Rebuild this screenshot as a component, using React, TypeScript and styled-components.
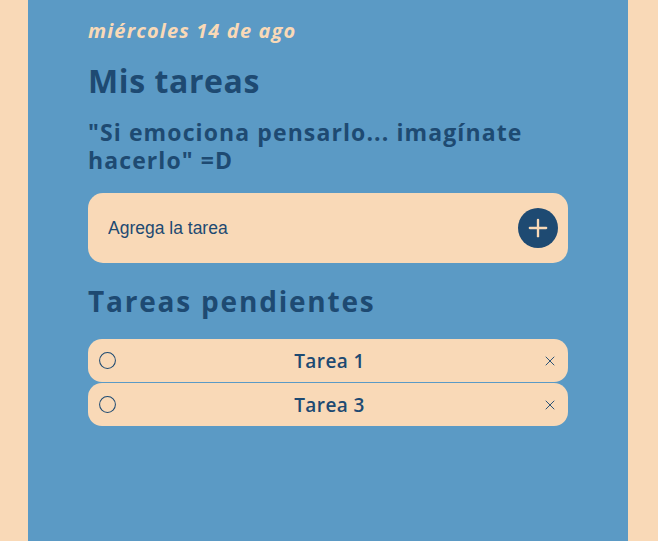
import React from 'react';
import styled, { createGlobalStyle } from 'styled-components';
import { Plus, Circle, X } from 'lucide-react';

const GlobalStyle = createGlobalStyle`
  html, body {
    margin: 0;
    padding: 0;
    background: #f9d9b7;
  }
  body {
    font-family: 'Open Sans', 'Liberation Sans', sans-serif;
  }
`;

const Page = styled.main`
  width: 600px;
  min-height: 541px;
  margin: 0 0 0 28px;
  background: #5b9ac5;
  padding: 18px 60px 0;
  box-sizing: border-box;
  display: flex;
  flex-direction: column;
`;

const DateLine = styled.p`
  margin: 0;
  font-size: 20px;
  font-weight: 700;
  font-style: italic;
  letter-spacing: 1.15px;
  color: #f9d9b7;
  line-height: 26px;
`;

const Title = styled.h1`
  margin: 17px 0 0;
  font-size: 32px;
  font-weight: 700;
  letter-spacing: 0.6px;
  color: #1e4a72;
  line-height: 40px;
`;

const Quote = styled.h2`
  margin: 17px 0 0;
  font-size: 23px;
  font-weight: 700;
  letter-spacing: 1.1px;
  color: #1e4a72;
  line-height: 28px;
`;

const InputBox = styled.form`
  margin-top: 19px;
  height: 70px;
  background: #f9d9b7;
  border-radius: 15px;
  display: flex;
  align-items: center;
  justify-content: space-between;
  padding: 0 10px 0 20px;
`;

const TaskInput = styled.input`
  flex: 1;
  border: none;
  padding: 0;
  background: transparent;
  outline: none;
  font-family: 'Liberation Sans', Arial, sans-serif;
  font-size: 17.5px;
  color: #1e4a72;
  &::placeholder {
    color: #1e4a72;
    opacity: 1;
  }
`;

const AddButton = styled.button`
  width: 40px;
  height: 40px;
  border-radius: 50%;
  border: none;
  background: #1e4a72;
  color: #f9d9b7;
  display: flex;
  align-items: center;
  justify-content: center;
  padding: 0;
`;

const SectionTitle = styled.h2`
  margin: 20px 0 0;
  font-size: 28px;
  font-weight: 700;
  letter-spacing: 1.8px;
  color: #1e4a72;
  line-height: 36px;
`;

const TaskList = styled.ul`
  list-style: none;
  margin: 20px 0 0;
  padding: 0;
  display: flex;
  flex-direction: column;
  gap: 1px;
`;

const TaskItem = styled.li`
  height: 43px;
  background: #f9d9b7;
  border-radius: 14px;
  display: flex;
  align-items: center;
  padding: 0 10px;
  color: #1e4a72;
`;

const TaskText = styled.span`
  flex: 1;
  text-align: center;
  font-size: 19px;
  font-weight: 600;
  letter-spacing: 0.4px;
`;

const tasks = ['Tarea 1', 'Tarea 3'];

export default function App() {
  return (
    <>
      <GlobalStyle />
      <Page>
        <DateLine>miércoles 14 de ago</DateLine>
        <Title>Mis tareas</Title>
        <Quote>"Si emociona pensarlo... imagínate hacerlo" =D</Quote>
        <InputBox onSubmit={(e) => e.preventDefault()}>
          <TaskInput placeholder="Agrega la tarea" />
          <AddButton type="submit">
            <Plus size={28} strokeWidth={2} />
          </AddButton>
        </InputBox>
        <SectionTitle>Tareas pendientes</SectionTitle>
        <TaskList>
          {tasks.map((t) => (
            <TaskItem key={t}>
              <Circle size={19} strokeWidth={1.3} />
              <TaskText>{t}</TaskText>
              <X size={16} strokeWidth={1.4} />
            </TaskItem>
          ))}
        </TaskList>
      </Page>
    </>
  );
}
